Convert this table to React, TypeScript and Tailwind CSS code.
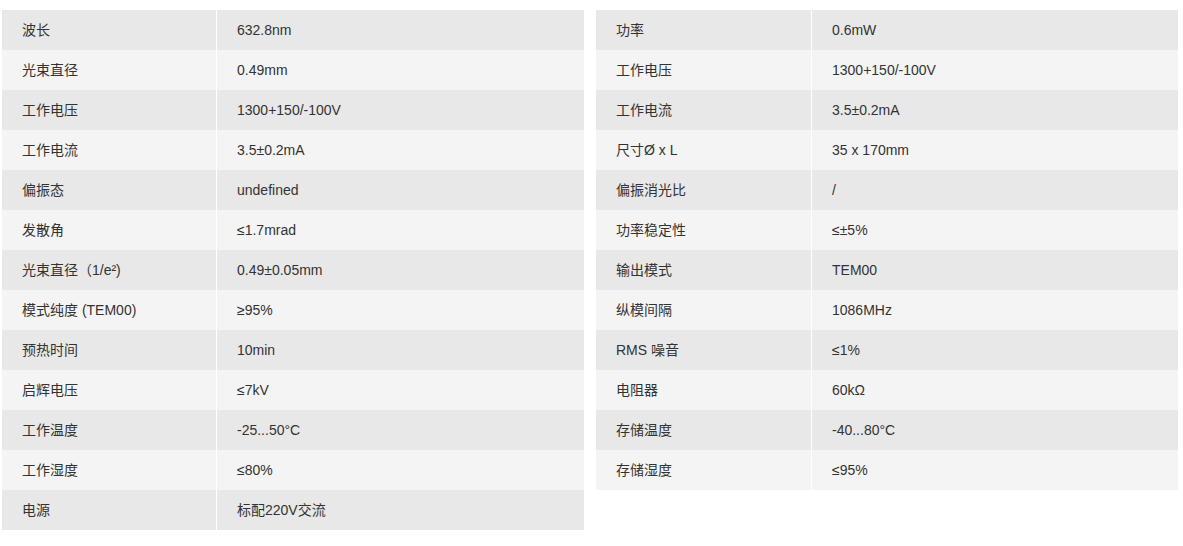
const left: [string, string][] = [
  ["波长", "632.8nm"],
  ["光束直径", "0.49mm"],
  ["工作电压", "1300+150/-100V"],
  ["工作电流", "3.5±0.2mA"],
  ["偏振态", "undefined"],
  ["发散角", "≤1.7mrad"],
  ["光束直径（1/e²)", "0.49±0.05mm"],
  ["模式纯度 (TEM00)", "≥95%"],
  ["预热时间", "10min"],
  ["启辉电压", "≤7kV"],
  ["工作温度", "-25...50°C"],
  ["工作湿度", "≤80%"],
  ["电源", "标配220V交流"],
];

const right: [string, string][] = [
  ["功率", "0.6mW"],
  ["工作电压", "1300+150/-100V"],
  ["工作电流", "3.5±0.2mA"],
  ["尺寸Ø x L", "35 x 170mm"],
  ["偏振消光比", "/"],
  ["功率稳定性", "≤±5%"],
  ["输出模式", "TEM00"],
  ["纵模间隔", "1086MHz"],
  ["RMS 噪音", "≤1%"],
  ["电阻器", "60kΩ"],
  ["存储温度", "-40...80°C"],
  ["存储湿度", "≤95%"],
];

function SpecTable({ rows, labelW }: { rows: [string, string][]; labelW: string }) {
  return (
    <div className="flex w-[582px] flex-col">
      {rows.map(([k, v], i) => (
        <div
          key={i}
          className={`flex h-10 items-center ${i % 2 === 0 ? "bg-[#e8e8e8]" : "bg-[#f5f4f5]"}`}
        >
          <div className={`flex h-full shrink-0 items-center border-r border-white pl-5 ${labelW}`}>{k}</div>
          <div className="flex h-full flex-1 items-center pl-5">{v}</div>
        </div>
      ))}
    </div>
  );
}

export default function App() {
  return (
    <div
      className="flex h-[546px] items-start gap-3 bg-white pl-[2px] pt-[10px] text-[14px] text-[#333]"
      style={{ fontFamily: '"Liberation Sans", Arial, "Noto Sans CJK SC", sans-serif' }}
    >
      <SpecTable rows={left} labelW="w-[215px]" />
      <SpecTable rows={right} labelW="w-[216px]" />
    </div>
  );
}
